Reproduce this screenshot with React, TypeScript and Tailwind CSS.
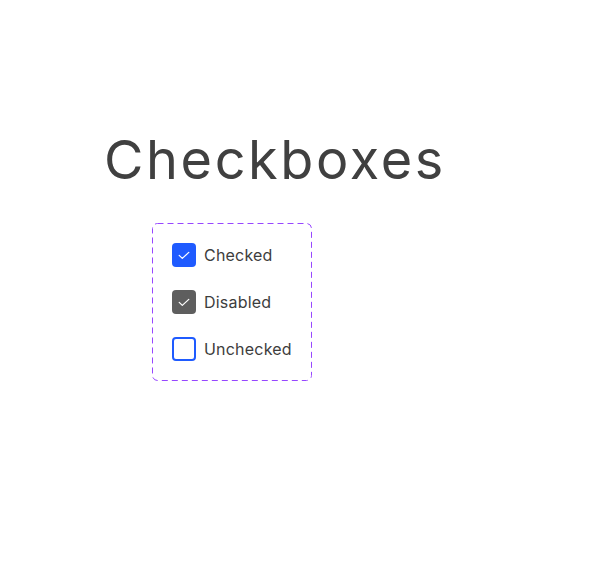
type Item = { label: string; state: "checked" | "disabled" | "unchecked" };

const items: Item[] = [
  { label: "Checked", state: "checked" },
  { label: "Disabled", state: "disabled" },
  { label: "Unchecked", state: "unchecked" },
];

function Tick() {
  return (
    <svg width="12" height="9" viewBox="0 0 12 9" fill="none">
      <path d="M1.2 4.4 L4.3 7.4 L10.8 1.4" stroke="white" strokeWidth="1.25" strokeLinecap="round" strokeLinejoin="round" />
    </svg>
  );
}

function Box({ state }: { state: Item["state"] }) {
  if (state === "unchecked") {
    return <span className="h-6 w-6 rounded-[4px] border-2 border-[#1f5bff] bg-white" />;
  }
  return (
    <span
      className={
        state === "checked"
          ? "flex h-6 w-6 items-center justify-center rounded-[4px] bg-[#1f5bff]"
          : "flex h-6 w-6 items-center justify-center rounded-[4px] bg-[#5e5e5e]"
      }
    >
      <Tick />
    </span>
  );
}

export default function App() {
  return (
    <div className="min-h-[573px] bg-white pt-[128px] pl-[104px] font-['Inter',sans-serif] text-[#3f3f3f]">
      <h1 className="text-[54px] leading-[64px] font-normal tracking-[2.6px] text-[#404040]">Checkboxes</h1>
      <div className="relative mt-[31px] ml-[48px] flex w-[160px] flex-col gap-[23px] p-5">
        {/* dashed frame */}
        <svg className="pointer-events-none absolute inset-0 h-full w-full" fill="none">
          <rect x="0.5" y="0.5" width="159" height="157" rx="5" stroke="#9747ff" strokeDasharray="6 4" />
        </svg>
        {items.map((it) => (
          <label key={it.label} className="flex items-center gap-2">
            <Box state={it.state} />
            <span className="-mt-px text-[16px] leading-6 tracking-[0.2px] text-[#3d3d3d]">{it.label}</span>
          </label>
        ))}
      </div>
    </div>
  );
}
